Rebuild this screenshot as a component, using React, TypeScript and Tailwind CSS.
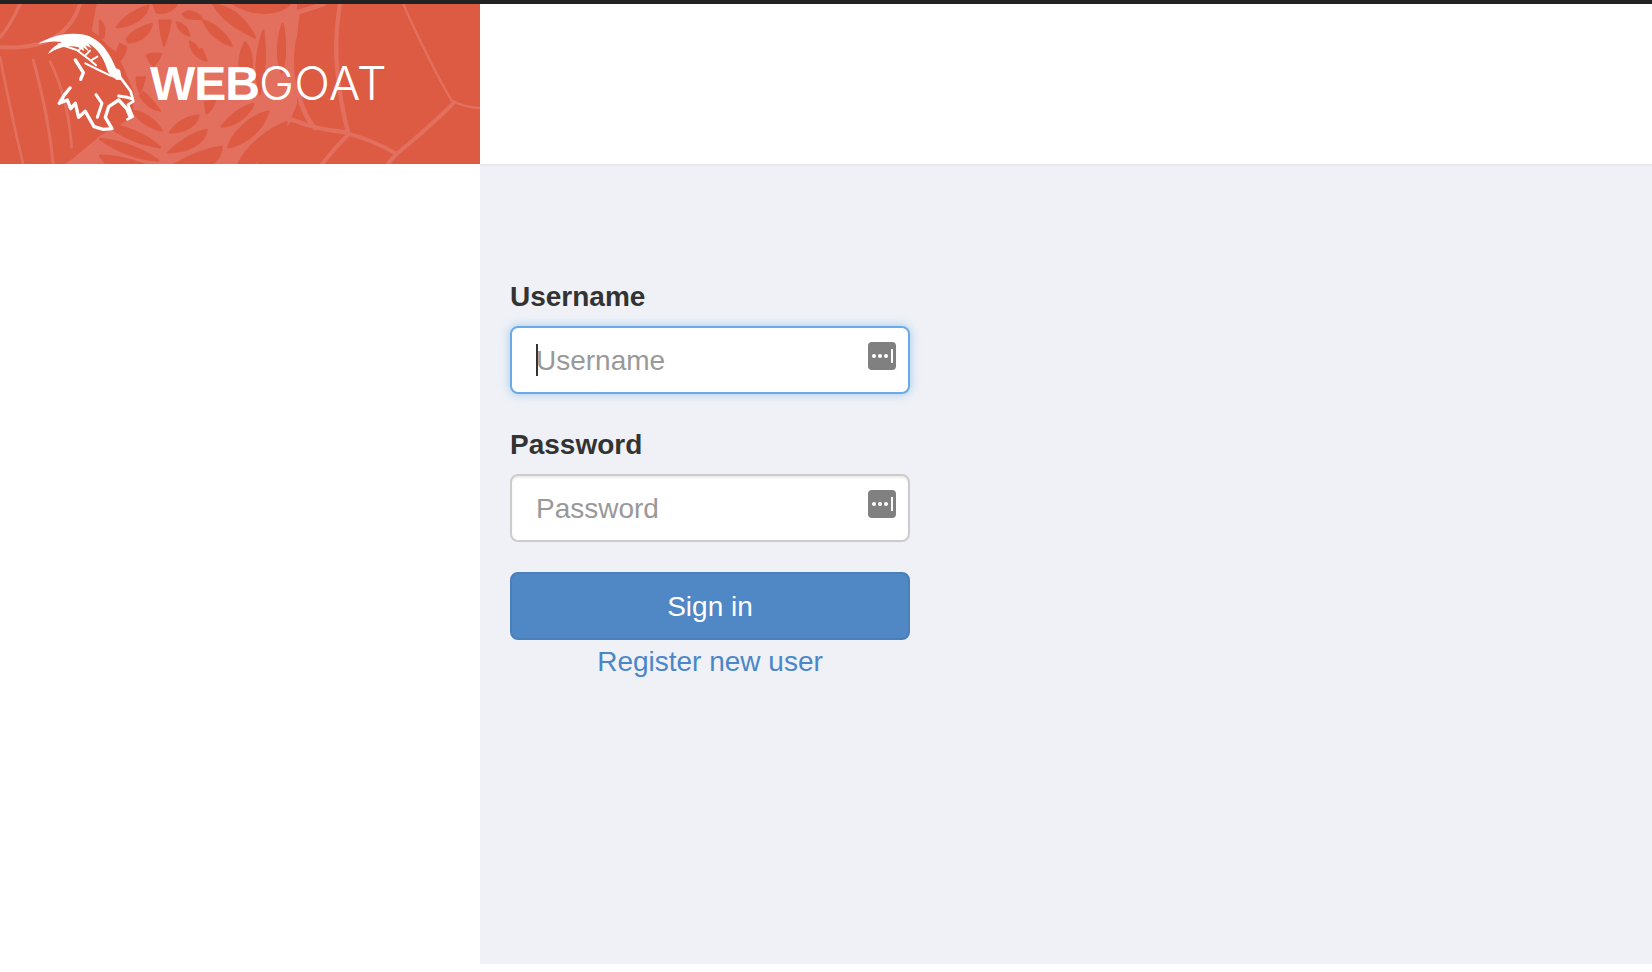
const sans = "font-['Liberation_Sans',Arial,sans-serif]"
const bannerRed = "#dd5a43"
const webLight = "#e3705f"

// loose strands around the dense middle of the web, 3x banner coordinates
const webStrands: [string, number][] = [
    ["M1210 0 C1235 60 1270 130 1300 190 C1320 230 1340 265 1355 290 C1385 305 1410 312 1440 312", 7],
    ["M1362 295 C1310 350 1250 400 1190 450 C1180 460 1170 470 1162 482", 12],
    ["M1030 385 C1090 400 1140 420 1190 450", 12],
    ["M1020 0 C1010 60 1005 130 1012 200 C1018 270 1030 330 1045 390", 13],
    ["M1045 392 C1015 420 990 450 965 482", 12],
    ["M1040 385 C980 380 920 365 870 345", 13],
    ["M840 40 C880 28 930 15 970 0", 14],
    ["M892 30 C882 100 878 170 890 240 C900 300 915 340 945 372", 14],
    ["M865 350 C825 390 780 440 745 482", 16],
    ["M0 130 C50 132 100 128 140 112 C190 92 225 50 240 0", 12],
    ["M0 100 C25 70 45 35 60 0", 10],
    ["M0 160 C20 260 45 380 70 482", 8],
    ["M100 168 C125 260 150 380 160 482", 9],
    ["M150 172 C190 250 210 350 215 430", 8],
    ["M200 482 C250 445 320 420 400 408", 9],
    ["M300 0 C290 30 285 60 300 90 C315 110 330 125 345 135", 10],
]

// dark cells between the thick threads, 3x coordinates from x=100 on the banner
const webCells = [
    "M50 70 C70 40 110 15 145 5 C140 40 100 65 50 70Z",
    "M80 105 C95 85 125 68 155 60 C150 90 120 115 85 115Z",
    "M160 0 L230 0 C220 20 190 30 170 25Z",
    "M248 30 C265 15 295 25 305 45 C280 45 255 45 248 30Z",
    "M178 50 L212 50 C208 80 200 105 192 125 C185 100 180 75 178 50Z",
    "M230 55 C250 58 262 70 268 95 C250 90 235 75 230 55Z",
    "M270 112 L288 125 L295 140 L305 135 L320 170 C295 165 270 140 270 112Z",
    "M310 50 C345 60 380 90 395 125 C360 115 325 85 310 50Z",
    "M340 0 C400 10 440 50 465 100 C420 80 365 45 340 0Z",
    "M400 0 L570 0 C540 30 470 40 400 0Z",
    "M140 155 C155 145 175 150 182 150 C178 170 165 180 160 185 C150 175 145 165 140 155Z",
    "M435 115 C450 130 458 160 455 190 L418 185 C418 160 425 135 435 115Z",
    "M490 80 C498 140 495 210 480 270 C465 220 465 150 490 80Z",
    "M548 60 C558 100 558 170 545 205 C530 170 530 110 548 60Z",
    "M595 95 C605 140 605 200 595 250 C582 200 582 140 595 95Z",
    "M210 385 C230 355 265 335 295 335 C290 365 255 385 210 385Z",
    "M205 445 C240 410 285 385 320 378 C315 415 265 445 205 445Z",
    "M225 480 C270 455 320 435 365 428 C365 450 345 480 330 480Z",
    "M365 368 C385 340 420 310 460 300 C445 335 410 365 365 368Z",
    "M385 430 C395 390 450 335 505 322 C490 375 440 420 385 430Z",
    "M415 480 C440 430 500 375 560 355 C545 400 500 450 460 480Z",
    "M130 265 C150 280 165 300 180 320 C155 315 135 300 120 275Z",
    "M100 320 C130 325 165 345 185 380 C150 370 115 350 100 320Z",
    "M20 360 C70 365 140 390 180 430 C120 420 60 395 20 360Z",
    "M0 405 C60 410 130 435 175 470 C110 465 50 440 0 405Z",
    "M0 455 C50 455 100 470 130 480 L20 480Z",
    "M60 120 L78 130 C75 150 65 165 55 175 C45 160 50 140 60 120Z",
    "M110 220 L135 220 C130 240 125 255 120 265 C112 250 110 235 110 220Z",
    "M315 295 L345 290 C340 310 330 320 320 328Z",
    "M0 50 C10 60 18 75 10 100 L0 100Z",
]

function SpiderWeb() {
    return (
        <svg className="absolute inset-0 blur-[0.5px]" width="480" height="160" viewBox="0 0 1440 480" fill="none" aria-hidden="true">
            <path
                fill={webLight}
                d="M290 0 L275 80 L340 130 L370 190 L400 260 L400 340 L300 395 L200 480 L770 480 L870 350 L891 300 L891 0Z"
            />
            <g stroke={webLight} strokeLinecap="round">
                {webStrands.map(([d, w], i) => (
                    <path key={i} d={d} strokeWidth={w} />
                ))}
            </g>
            <g transform="translate(300 0)" fill={bannerRed} stroke={bannerRed} strokeWidth="7" strokeLinejoin="round">
                {webCells.map((d, i) => (
                    <path key={i} d={d} />
                ))}
            </g>
        </svg>
    )
}

function GoatLogo() {
    return (
        <svg className="absolute left-[20px] top-[16px] blur-[0.4px]" width="130" height="120" viewBox="0 0 390 360" fill="none" aria-hidden="true">
            <path
                fill="#fff"
                d="M55 72 C85 52 125 38 175 42 C225 44 262 80 288 145 L300 150 L306 178 L290 180 L268 162 L262 150 C250 110 230 85 205 70 L214 84 L196 76 L208 96 L190 82 L192 94 L175 82 C150 74 116 80 84 102 C94 84 110 74 126 66 C100 62 76 66 55 72Z"
            />
            <g stroke="#fff" strokeLinejoin="round" strokeLinecap="round">
                <path strokeWidth="6" d="M116 72 L170 90 L210 120 L228 136 M176 92 L186 78 M196 106 L210 92 M212 122 L232 110" />
                <path strokeWidth="10" d="M166 120 L190 158 L182 178" />
                <path strokeWidth="6" d="M196 130 L236 150 L270 166 L304 178" />
                <path strokeWidth="8" d="M304 176 L332 214 L340 244 L324 254 L338 290 L322 298" />
                <path
                    strokeWidth="10"
                    d="M150 204 L132 226 L118 250 L142 240 L152 266 L166 250 L176 292 L196 274 L222 320 L250 328 L276 326 L256 292 L266 260 L296 240 L320 266 L330 290"
                />
                <path strokeWidth="9" d="M228 224 L246 250 L232 292 M296 228 L322 232 L334 236" />
            </g>
        </svg>
    )
}

function KeyIcon() {
    return (
        <div className="absolute right-[14px] top-[16px] flex h-[28px] w-[28px] items-center justify-center gap-[2px] rounded-[4px] bg-[#808080]">
            <span className="h-[4px] w-[4px] rounded-full bg-white" />
            <span className="h-[4px] w-[4px] rounded-full bg-white" />
            <span className="h-[4px] w-[4px] rounded-full bg-white" />
            <span className="ml-[1px] h-[14px] w-[2px] bg-white" />
        </div>
    )
}

function Field({ label, focused }: { label: string; focused?: boolean }) {
    return (
        <div className="mb-[30px]">
            <label className="mb-[9px] block pt-[1px] text-[28px] font-bold leading-[40px] text-[#333]">{label}</label>
            <div className="relative">
                <input
                    type="text"
                    placeholder={label}
                    className={`block h-[68px] w-[400px] rounded-[8px] border-2 bg-white px-[24px] pt-[1px] text-[28px] outline-none placeholder:text-[#999] ${
                        focused
                            ? "border-[#6ca9e6] shadow-[0_0_10px_rgba(102,175,233,0.6)]"
                            : "border-[#ccc] shadow-[inset_0_2px_2px_rgba(0,0,0,0.075)]"
                    }`}
                />
                {focused && <span className="absolute left-[26px] top-[18px] h-[32px] w-[2px] bg-[#333]" />}
                <KeyIcon />
            </div>
        </div>
    )
}

export default function App() {
    return (
        <div className={`${sans} bg-white`}>
            <div className="h-[4px] bg-[#222]" />
            <div className="flex h-[960px]">
                <aside className="w-[480px] shrink-0">
                    <div className="relative h-[160px] overflow-hidden bg-[#dd5a43]">
                        <SpiderWeb />
                        <GoatLogo />
                        <div className="absolute left-[150px] top-[49px] whitespace-nowrap text-[48px] leading-[60px] text-white">
                            <span className="font-bold tracking-[-1px]">WEB</span>
                            <span className="font-['Inter'] text-[47px] font-light tracking-[0.3px]">GOAT</span>
                        </div>
                    </div>
                </aside>
                <div className="flex flex-1 flex-col">
                    <header className="h-[162px] border-b-2 border-[#e7e9ee] bg-white" />
                    <main className="flex-1 bg-[#eff1f6] pl-[30px] pt-[110px]">
                        <form className="w-[400px]">
                            <Field label="Username" focused />
                            <Field label="Password" />
                            <button
                                type="button"
                                className="block h-[68px] w-full rounded-[8px] border-2 border-[#4a7fbc] bg-[#5087c5] pt-[2px] text-[28px] text-white"
                            >
                                Sign in
                            </button>
                            <div className="pt-[2px] text-center text-[28px] leading-[40px]">
                                <a href="#" className="text-[#4a86c8]">
                                    Register new user
                                </a>
                            </div>
                        </form>
                    </main>
                </div>
            </div>
        </div>
    )
}
